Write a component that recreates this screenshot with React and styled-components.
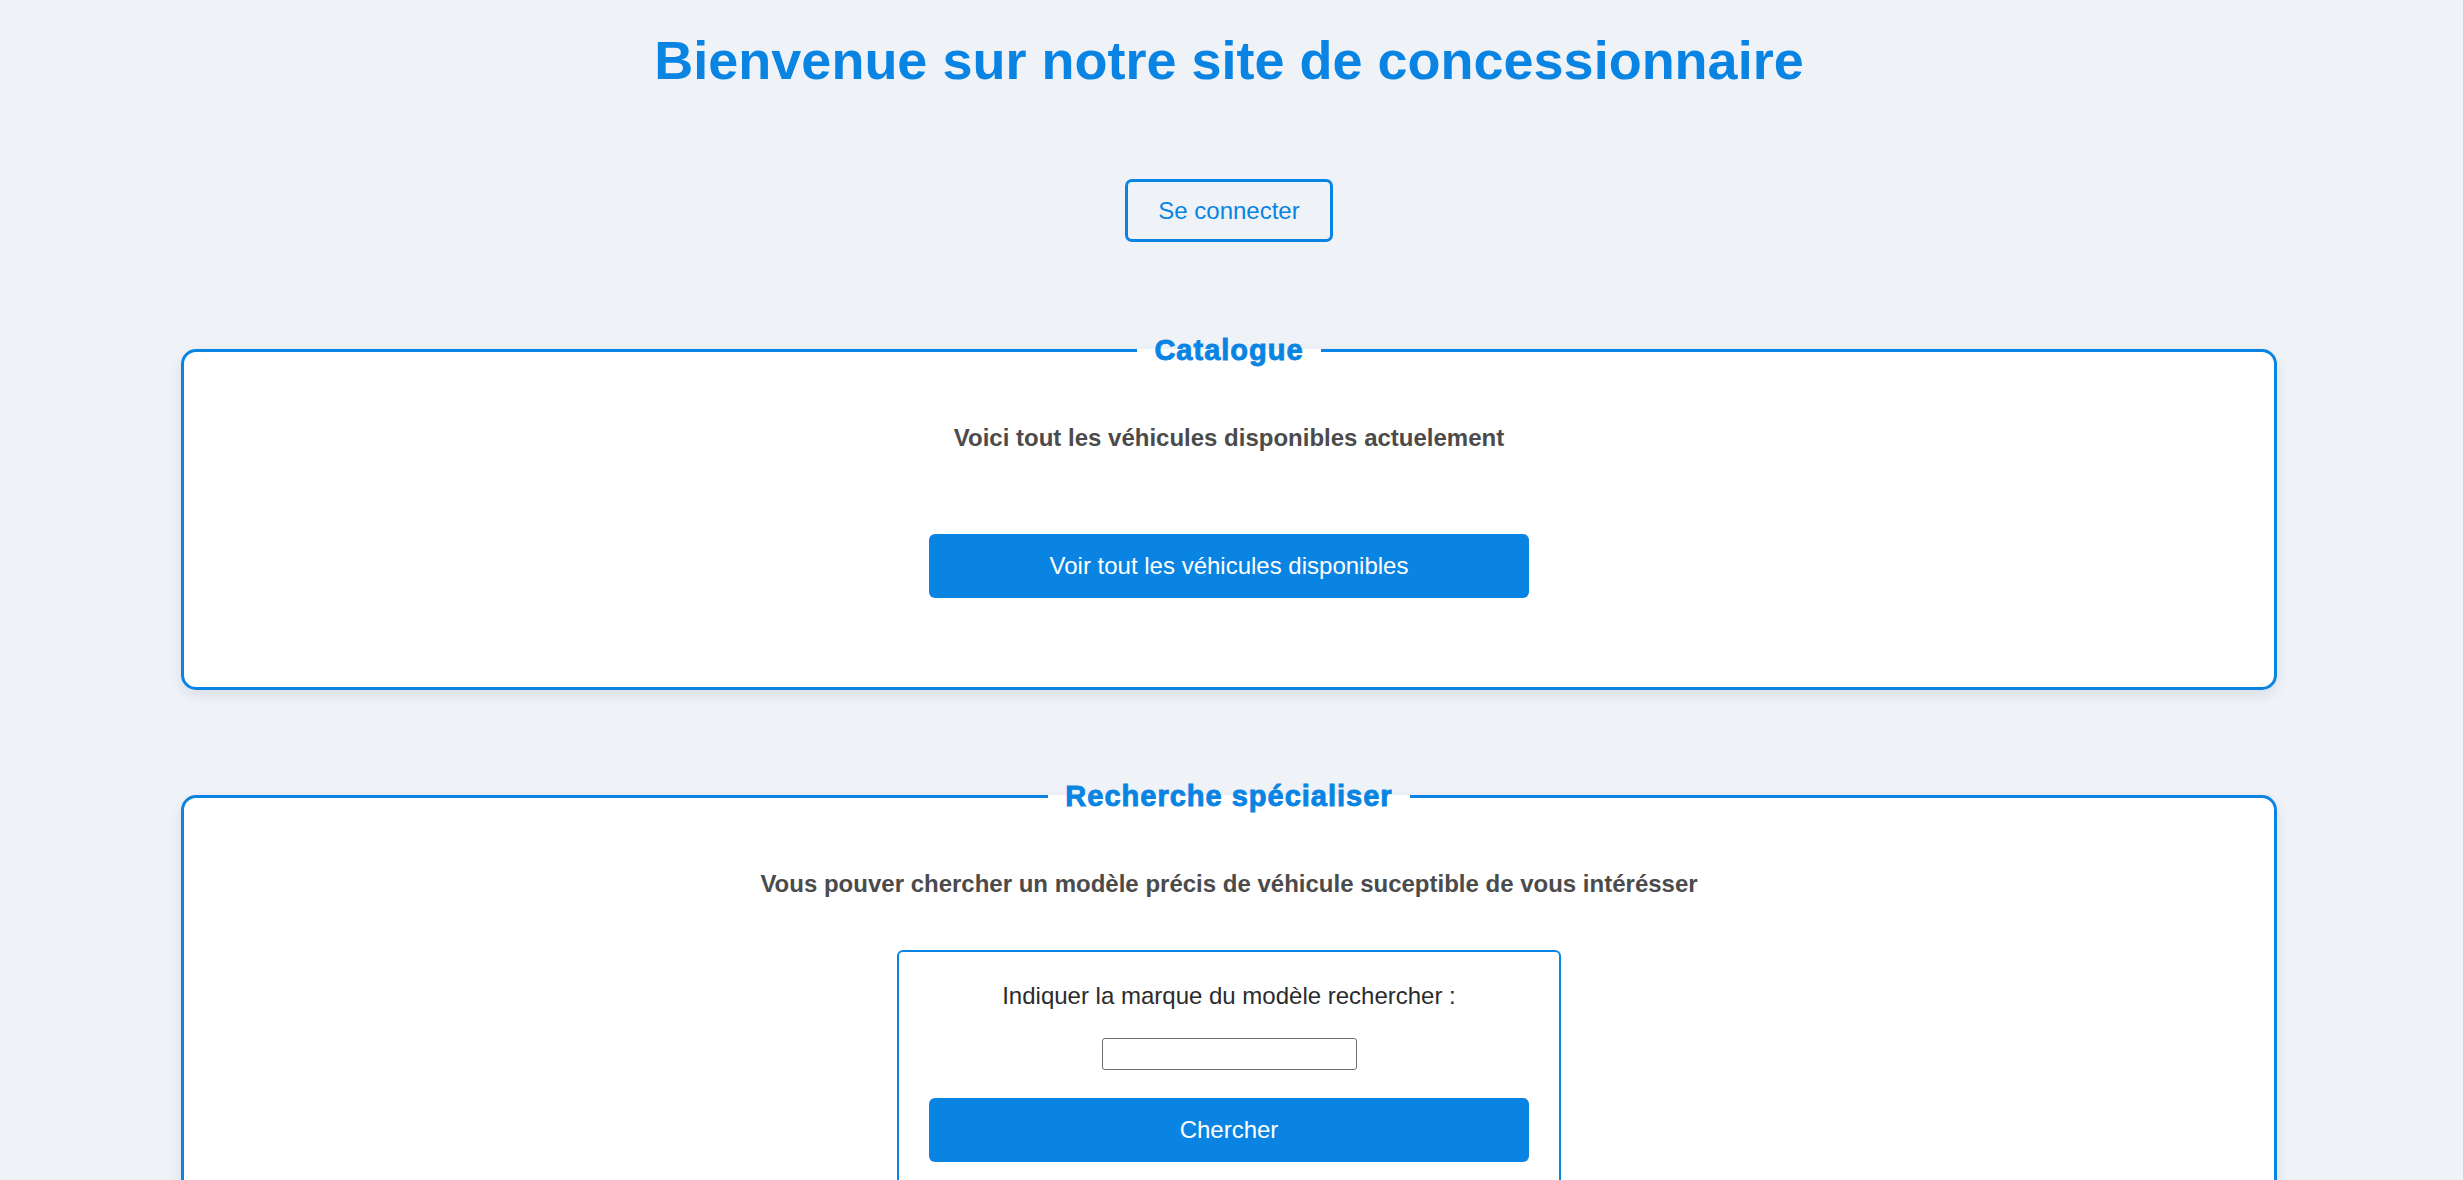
import styled, { createGlobalStyle } from "styled-components";

const GlobalStyle = createGlobalStyle`
  html, body {
    margin: 0;
    padding: 0;
    background: #eff2f7;
    font-family: "Liberation Sans", Arial, sans-serif;
  }
`;

const Page = styled.main`
  padding: 29px 5px 120px 0;
  display: flex;
  flex-direction: column;
  align-items: center;
`;

const Title = styled.h1`
  margin: 0;
  font-size: 54px;
  line-height: 62px;
  font-weight: 700;
  color: #0984e3;
  text-align: center;
`;

const LoginButton = styled.button`
  margin-top: 88px;
  padding: 15px 30px;
  border: 3px solid #0984e3;
  border-radius: 7px;
  background: transparent;
  color: #0984e3;
  font-family: inherit;
  font-size: 24px;
  line-height: 27px;
  cursor: pointer;
`;

const Section = styled.fieldset`
  box-sizing: border-box;
  width: calc(100% - 362px);
  margin: ${({ $top }) => $top}px 0 0;
  padding: 56px 40px ${({ $bottom }) => $bottom}px;
  border: 3px solid #0984e3;
  border-radius: 15px;
  background: #fff;
  box-shadow: 0 5px 12px rgba(30, 50, 80, 0.1);
  display: flex;
  flex-direction: column;
  align-items: center;
`;

const Legend = styled.legend`
  margin: 0 auto;
  padding: 0 17px;
  font-size: 29px;
  line-height: 35px;
  font-weight: 700;
  letter-spacing: 1px;
  color: #0984e3;
  -webkit-text-stroke: 0.9px #0984e3;
`;

const Intro = styled.p`
  margin: 0;
  font-size: 24px;
  line-height: 27px;
  font-weight: 700;
  color: #4b4b4b;
  text-align: center;
`;

const PrimaryButton = styled.button`
  box-sizing: border-box;
  width: 600px;
  margin-top: ${({ $top = 0 }) => $top}px;
  padding: 18px 0;
  border: none;
  border-radius: 6px;
  background: #0984e3;
  color: #fff;
  font-family: inherit;
  font-size: 24px;
  line-height: 28px;
  cursor: pointer;
`;

const SearchBox = styled.form`
  margin-top: 53px;
  padding: 30px;
  border: 2px solid #0984e3;
  border-radius: 6px;
  background: #fff;
  display: flex;
  flex-direction: column;
  align-items: center;
  gap: 28px;
`;

const FieldLabel = styled.label`
  font-size: 24px;
  line-height: 28px;
  color: #2b2b2b;
`;

const TextInput = styled.input`
  box-sizing: border-box;
  width: 255px;
  height: 32px;
  border: 1px solid #6f6f6f;
  border-radius: 3px;
  background: #fff;
  font-family: inherit;
  font-size: 18px;
`;

export default function App() {
  return (
    <>
      <GlobalStyle />
      <Page>
        <Title>Bienvenue sur notre site de concessionnaire</Title>
        <LoginButton type="button">Se connecter</LoginButton>

        <Section $top={91} $bottom={89}>
          <Legend>Catalogue</Legend>
          <Intro>Voici tout les véhicules disponibles actuelement</Intro>
          <PrimaryButton type="button" $top={83}>
            Voir tout les véhicules disponibles
          </PrimaryButton>
        </Section>

        <Section $top={89} $bottom={60}>
          <Legend>Recherche spécialiser</Legend>
          <Intro>
            Vous pouver chercher un modèle précis de véhicule suceptible de vous intérésser
          </Intro>
          <SearchBox onSubmit={(e) => e.preventDefault()}>
            <FieldLabel htmlFor="marque">Indiquer la marque du modèle rechercher :</FieldLabel>
            <TextInput id="marque" type="text" />
            <PrimaryButton type="submit">Chercher</PrimaryButton>
          </SearchBox>
        </Section>
      </Page>
    </>
  );
}
